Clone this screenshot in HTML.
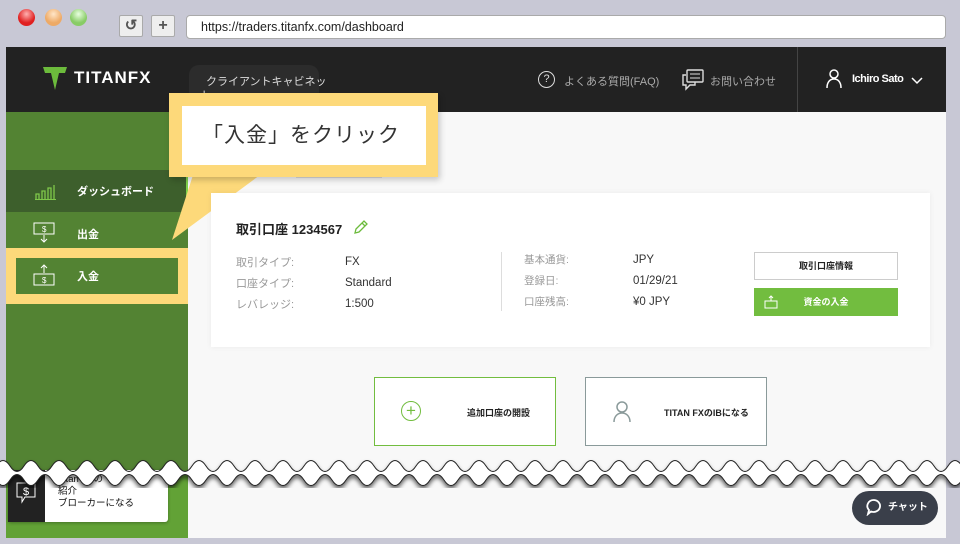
<!DOCTYPE html>
<html><head><meta charset="utf-8"><style>
*{margin:0;padding:0;box-sizing:border-box}
body{width:960px;height:544px;background:#c8c8d5;font-family:"Liberation Sans","Noto Sans CJK JP",sans-serif;position:relative;overflow:hidden}
.a{position:absolute}
.dot{width:17px;height:17px;border-radius:50%;top:9px}
</style></head><body>
<div class="a dot" style="left:18px;background:radial-gradient(circle at 50% 30%,#ffb0b0,#e02020 60%)"></div>
<div class="a dot" style="left:45px;background:radial-gradient(circle at 50% 30%,#ffe6c8,#eeaa66 60%)"></div>
<div class="a dot" style="left:70px;background:radial-gradient(circle at 50% 30%,#e8ffe0,#88cc66 60%)"></div>
<div class="a" style="left:119px;top:15px;width:24px;height:22px;background:#eee;border:1px solid #aaa;border-radius:2px;font-size:15px;text-align:center;line-height:20px;color:#555;font-weight:bold">↺</div>
<div class="a" style="left:151px;top:15px;width:24px;height:22px;background:#eee;border:1px solid #aaa;border-radius:2px;font-size:16px;text-align:center;line-height:20px;color:#555;font-weight:bold">+</div>
<div class="a" style="left:186px;top:15px;width:760px;height:24px;background:#fff;border:1px solid #aaa;border-radius:4px;font-size:12.5px;line-height:22px;padding-left:14px;color:#222">https://traders.titanfx.com/dashboard</div>

<div class="a" style="left:6px;top:47px;width:940px;height:491px;background:#f8f8f8"></div>
<div class="a" style="left:6px;top:47px;width:940px;height:65px;background:#222"></div>
<svg class="a" style="left:42px;top:66px" width="26" height="26"><path d="M1 1h24l-2 6h-6l-4 17-4-17H3z" fill="#6cbb3c"/></svg>
<div class="a" style="left:74px;top:68px;color:#fff;font-weight:bold;font-size:17px;letter-spacing:1px">TITANFX</div>
<div class="a" style="left:189px;top:65px;width:130px;height:50px;background:#2c2c2c;border-radius:10px"></div>
<div class="a" style="left:206px;top:73px;color:#ddd;font-size:11px">クライアントキャビネッ</div>
<div class="a" style="left:200px;top:87px;color:#ddd;font-size:11px">ト</div>
<div class="a" style="left:538px;top:71px;width:17px;height:17px;border:1.5px solid #ddd;border-radius:50%;color:#ddd;font-size:11px;text-align:center;line-height:14px">?</div>
<div class="a" style="left:564px;top:73px;color:#aaa;font-size:11px">よくある質問(FAQ)</div>
<svg class="a" style="left:681px;top:69px" width="24" height="22"><rect x="6" y="1" width="16" height="12" rx="1" fill="none" stroke="#ddd" stroke-width="1.4"/><path d="M9 5h10M9 9h10" stroke="#ddd"/><path d="M5 6H2v10h3v4l4-4h5v-3" fill="none" stroke="#ddd" stroke-width="1.4"/></svg>
<div class="a" style="left:710px;top:73px;color:#aaa;font-size:11px">お問い合わせ</div>
<div class="a" style="left:797px;top:47px;width:1px;height:65px;background:#444"></div>
<svg class="a" style="left:826px;top:69px" width="16" height="20"><circle cx="8" cy="5" r="4" fill="none" stroke="#fff" stroke-width="1.5"/><path d="M1 19c0-6 3-9 7-9s7 3 7 9" fill="none" stroke="#fff" stroke-width="1.5"/></svg>
<div class="a" style="left:852px;top:73px;color:#fff;font-size:11px;font-weight:bold;letter-spacing:-.5px">Ichiro Sato</div>
<svg class="a" style="left:911px;top:77px" width="12" height="8"><path d="M1 1l5 5 5-5" fill="none" stroke="#fff" stroke-width="1.5"/></svg>

<div class="a" style="left:6px;top:112px;width:182px;height:426px;background:#538333"></div>
<div class="a" style="left:6px;top:170px;width:180px;height:42px;background:#3d5f2c"></div>
<div class="a" style="left:186px;top:170px;width:2px;height:42px;background:#7fd14a"></div>
<svg class="a" style="left:34px;top:180px" width="22" height="20"><path d="M2 19V14h3v5M8 19V11h3v8M14 19V8h3v11M20 19V5" fill="none" stroke="#7fc84a" stroke-width="1.3"/><path d="M1 19.5h21" stroke="#7fc84a"/></svg>
<div class="a" style="left:77px;top:183px;color:#fff;font-size:11px;font-weight:bold">ダッシュボード</div>
<svg class="a" style="left:33px;top:222px" width="22" height="22"><rect x="1" y="1" width="20" height="11" fill="none" stroke="#fff"/><text x="9" y="10" fill="#fff" font-size="8">$</text><path d="M11 13v7M8 17l3 3 3-3" fill="none" stroke="#fff"/></svg>
<div class="a" style="left:77px;top:226px;color:#fff;font-size:11px;font-weight:bold">出金</div>
<div class="a" style="left:6px;top:248px;width:182px;height:56px;background:#fdd97a"></div>
<div class="a" style="left:16px;top:258px;width:162px;height:36px;background:#538333"></div>
<svg class="a" style="left:33px;top:264px" width="22" height="22"><path d="M11 9V1M8 4l3-3 3 3" fill="none" stroke="#fff"/><rect x="1" y="10" width="20" height="11" fill="none" stroke="#fff"/><text x="9" y="19" fill="#fff" font-size="8">$</text></svg>
<div class="a" style="left:77px;top:268px;color:#fff;font-size:11px;font-weight:bold">入金</div>

<div class="a" style="left:296px;top:165px;width:86px;height:13px;background:#fff;border:1px solid #ddd"></div>
<svg class="a" style="left:165px;top:160px" width="120" height="90"><path d="M28 15L7 80 95 15z" fill="#fdd97a"/></svg>
<div class="a" style="left:169px;top:93px;width:269px;height:84px;background:#fdd97a;box-shadow:2px 3px 6px rgba(0,0,0,.2)"></div>
<div class="a" style="left:182px;top:106px;width:244px;height:59px;background:#fff;font-size:21px;color:#333;line-height:59px;padding-left:20px;letter-spacing:1px">「入金」をクリック</div>

<div class="a" style="left:211px;top:193px;width:719px;height:154px;background:#fff;box-shadow:0 0 6px rgba(0,0,0,.06)"></div>
<div class="a" style="left:236px;top:219px;font-size:13px;font-weight:bold;color:#222">取引口座 1234567</div>
<svg class="a" style="left:353px;top:219px" width="16" height="16"><path d="M2 14l1-4 8-8 3 3-8 8z M9 4l3 3" fill="none" stroke="#6cbb3c" stroke-width="1.3"/></svg>
<div class="a" style="left:236px;top:253px;font-size:11px;color:#999;line-height:21px">取引タイプ:<br>口座タイプ:<br>レバレッジ:</div>
<div class="a" style="left:345px;top:252px;font-size:11.5px;color:#333;line-height:21px">FX<br>Standard<br>1:500</div>
<div class="a" style="left:501px;top:252px;width:1px;height:59px;background:#ddd"></div>
<div class="a" style="left:524px;top:250px;font-size:10.5px;color:#999;line-height:21px">基本通貨:<br>登録日:<br>口座残高:</div>
<div class="a" style="left:633px;top:250px;font-size:11.5px;color:#333;line-height:21px">JPY<br>01/29/21<br>¥0 JPY</div>
<div class="a" style="left:754px;top:252px;width:144px;height:28px;border:1px solid #ccc;background:#fff;font-size:9px;font-weight:bold;text-align:center;line-height:26px;color:#222">取引口座情報</div>
<div class="a" style="left:754px;top:288px;width:144px;height:28px;background:#72bd3f;font-size:9px;font-weight:bold;text-align:center;line-height:28px;color:#fff">資金の入金</div>
<svg class="a" style="left:764px;top:295px" width="14" height="14"><path d="M7 1v5M5 3l2-2 2 2" fill="none" stroke="#fff"/><rect x="1" y="6" width="12" height="7" fill="none" stroke="#fff"/></svg>

<div class="a" style="left:374px;top:377px;width:182px;height:69px;background:#fff;border:1.5px solid #72bd3f"></div>
<div class="a" style="left:401px;top:401px;width:20px;height:20px;border:1.5px solid #72bd3f;border-radius:50%;color:#72bd3f;text-align:center;line-height:17px;font-size:17px">+</div>
<div class="a" style="left:467px;top:406px;font-size:9px;font-weight:bold;color:#222">追加口座の開設</div>
<div class="a" style="left:585px;top:377px;width:182px;height:69px;background:#fff;border:1.5px solid #8a9a9a"></div>
<svg class="a" style="left:613px;top:401px" width="18" height="22"><circle cx="9" cy="6" r="5" fill="none" stroke="#8a9a9a" stroke-width="1.5"/><path d="M1 21c0-6 4-9 8-9s8 3 8 9" fill="none" stroke="#8a9a9a" stroke-width="1.5"/></svg>
<div class="a" style="left:664px;top:406px;font-size:9px;font-weight:bold;color:#222">TITAN FXのIBになる</div>

<div class="a" style="left:6px;top:474px;width:182px;height:64px;background:#62a236"></div>
<div class="a" style="left:8px;top:470px;width:160px;height:52px;background:#fff;border-radius:0 0 3px 3px;box-shadow:0 1px 3px rgba(0,0,0,.3)"></div>
<div class="a" style="left:8px;top:470px;width:37px;height:52px;background:#222"></div>
<svg class="a" style="left:16px;top:482px" width="22" height="22"><path d="M1 1h18v14H9l-3 5v-5H1z" fill="none" stroke="#fff"/><text x="7" y="13" fill="#fff" font-size="11">$</text></svg>
<div class="a" style="left:58px;top:474px;font-size:9.5px;color:#111;line-height:12px">Titan FXの<br>紹介<br>ブローカーになる</div>

<svg class="a" style="left:0;top:452px" width="960" height="40"><defs><filter id="s"><feDropShadow dx="0" dy="3" stdDeviation="2" flood-opacity=".6"/></filter></defs>
<path filter="url(#s)" fill="#fff" stroke="#222" stroke-width="1" d="M-4 14 q7 -11 14 0 t14 0 t14 0 t14 0 t14 0 t14 0 t14 0 t14 0 t14 0 t14 0 t14 0 t14 0 t14 0 t14 0 t14 0 t14 0 t14 0 t14 0 t14 0 t14 0 t14 0 t14 0 t14 0 t14 0 t14 0 t14 0 t14 0 t14 0 t14 0 t14 0 t14 0 t14 0 t14 0 t14 0 t14 0 t14 0 t14 0 t14 0 t14 0 t14 0 t14 0 t14 0 t14 0 t14 0 t14 0 t14 0 t14 0 t14 0 t14 0 t14 0 t14 0 t14 0 t14 0 t14 0 t14 0 t14 0 t14 0 t14 0 t14 0 t14 0 t14 0 t14 0 t14 0 t14 0 t14 0 t14 0 t14 0 t14 0 t14 0 t14 0 t14 0 V28 q-7 11 -14 0 t-14 0 t-14 0 t-14 0 t-14 0 t-14 0 t-14 0 t-14 0 t-14 0 t-14 0 t-14 0 t-14 0 t-14 0 t-14 0 t-14 0 t-14 0 t-14 0 t-14 0 t-14 0 t-14 0 t-14 0 t-14 0 t-14 0 t-14 0 t-14 0 t-14 0 t-14 0 t-14 0 t-14 0 t-14 0 t-14 0 t-14 0 t-14 0 t-14 0 t-14 0 t-14 0 t-14 0 t-14 0 t-14 0 t-14 0 t-14 0 t-14 0 t-14 0 t-14 0 t-14 0 t-14 0 t-14 0 t-14 0 t-14 0 t-14 0 t-14 0 t-14 0 t-14 0 t-14 0 t-14 0 t-14 0 t-14 0 t-14 0 t-14 0 t-14 0 t-14 0 t-14 0 t-14 0 t-14 0 t-14 0 t-14 0 t-14 0 t-14 0 t-14 0 t-14 0 t-14 0 Z"/></svg>

<div class="a" style="left:852px;top:491px;width:86px;height:34px;background:#3a3f4a;border-radius:17px;color:#fff;font-size:10px;font-weight:bold;line-height:34px;padding-left:36px">チャット</div>
<svg class="a" style="left:866px;top:499px" width="16" height="17"><path d="M8 1a6.5 6 0 1 1-3 11.5L2 15l1-4A6.5 6 0 0 1 8 1z" fill="none" stroke="#fff" stroke-width="1.8"/></svg>
</body></html>
